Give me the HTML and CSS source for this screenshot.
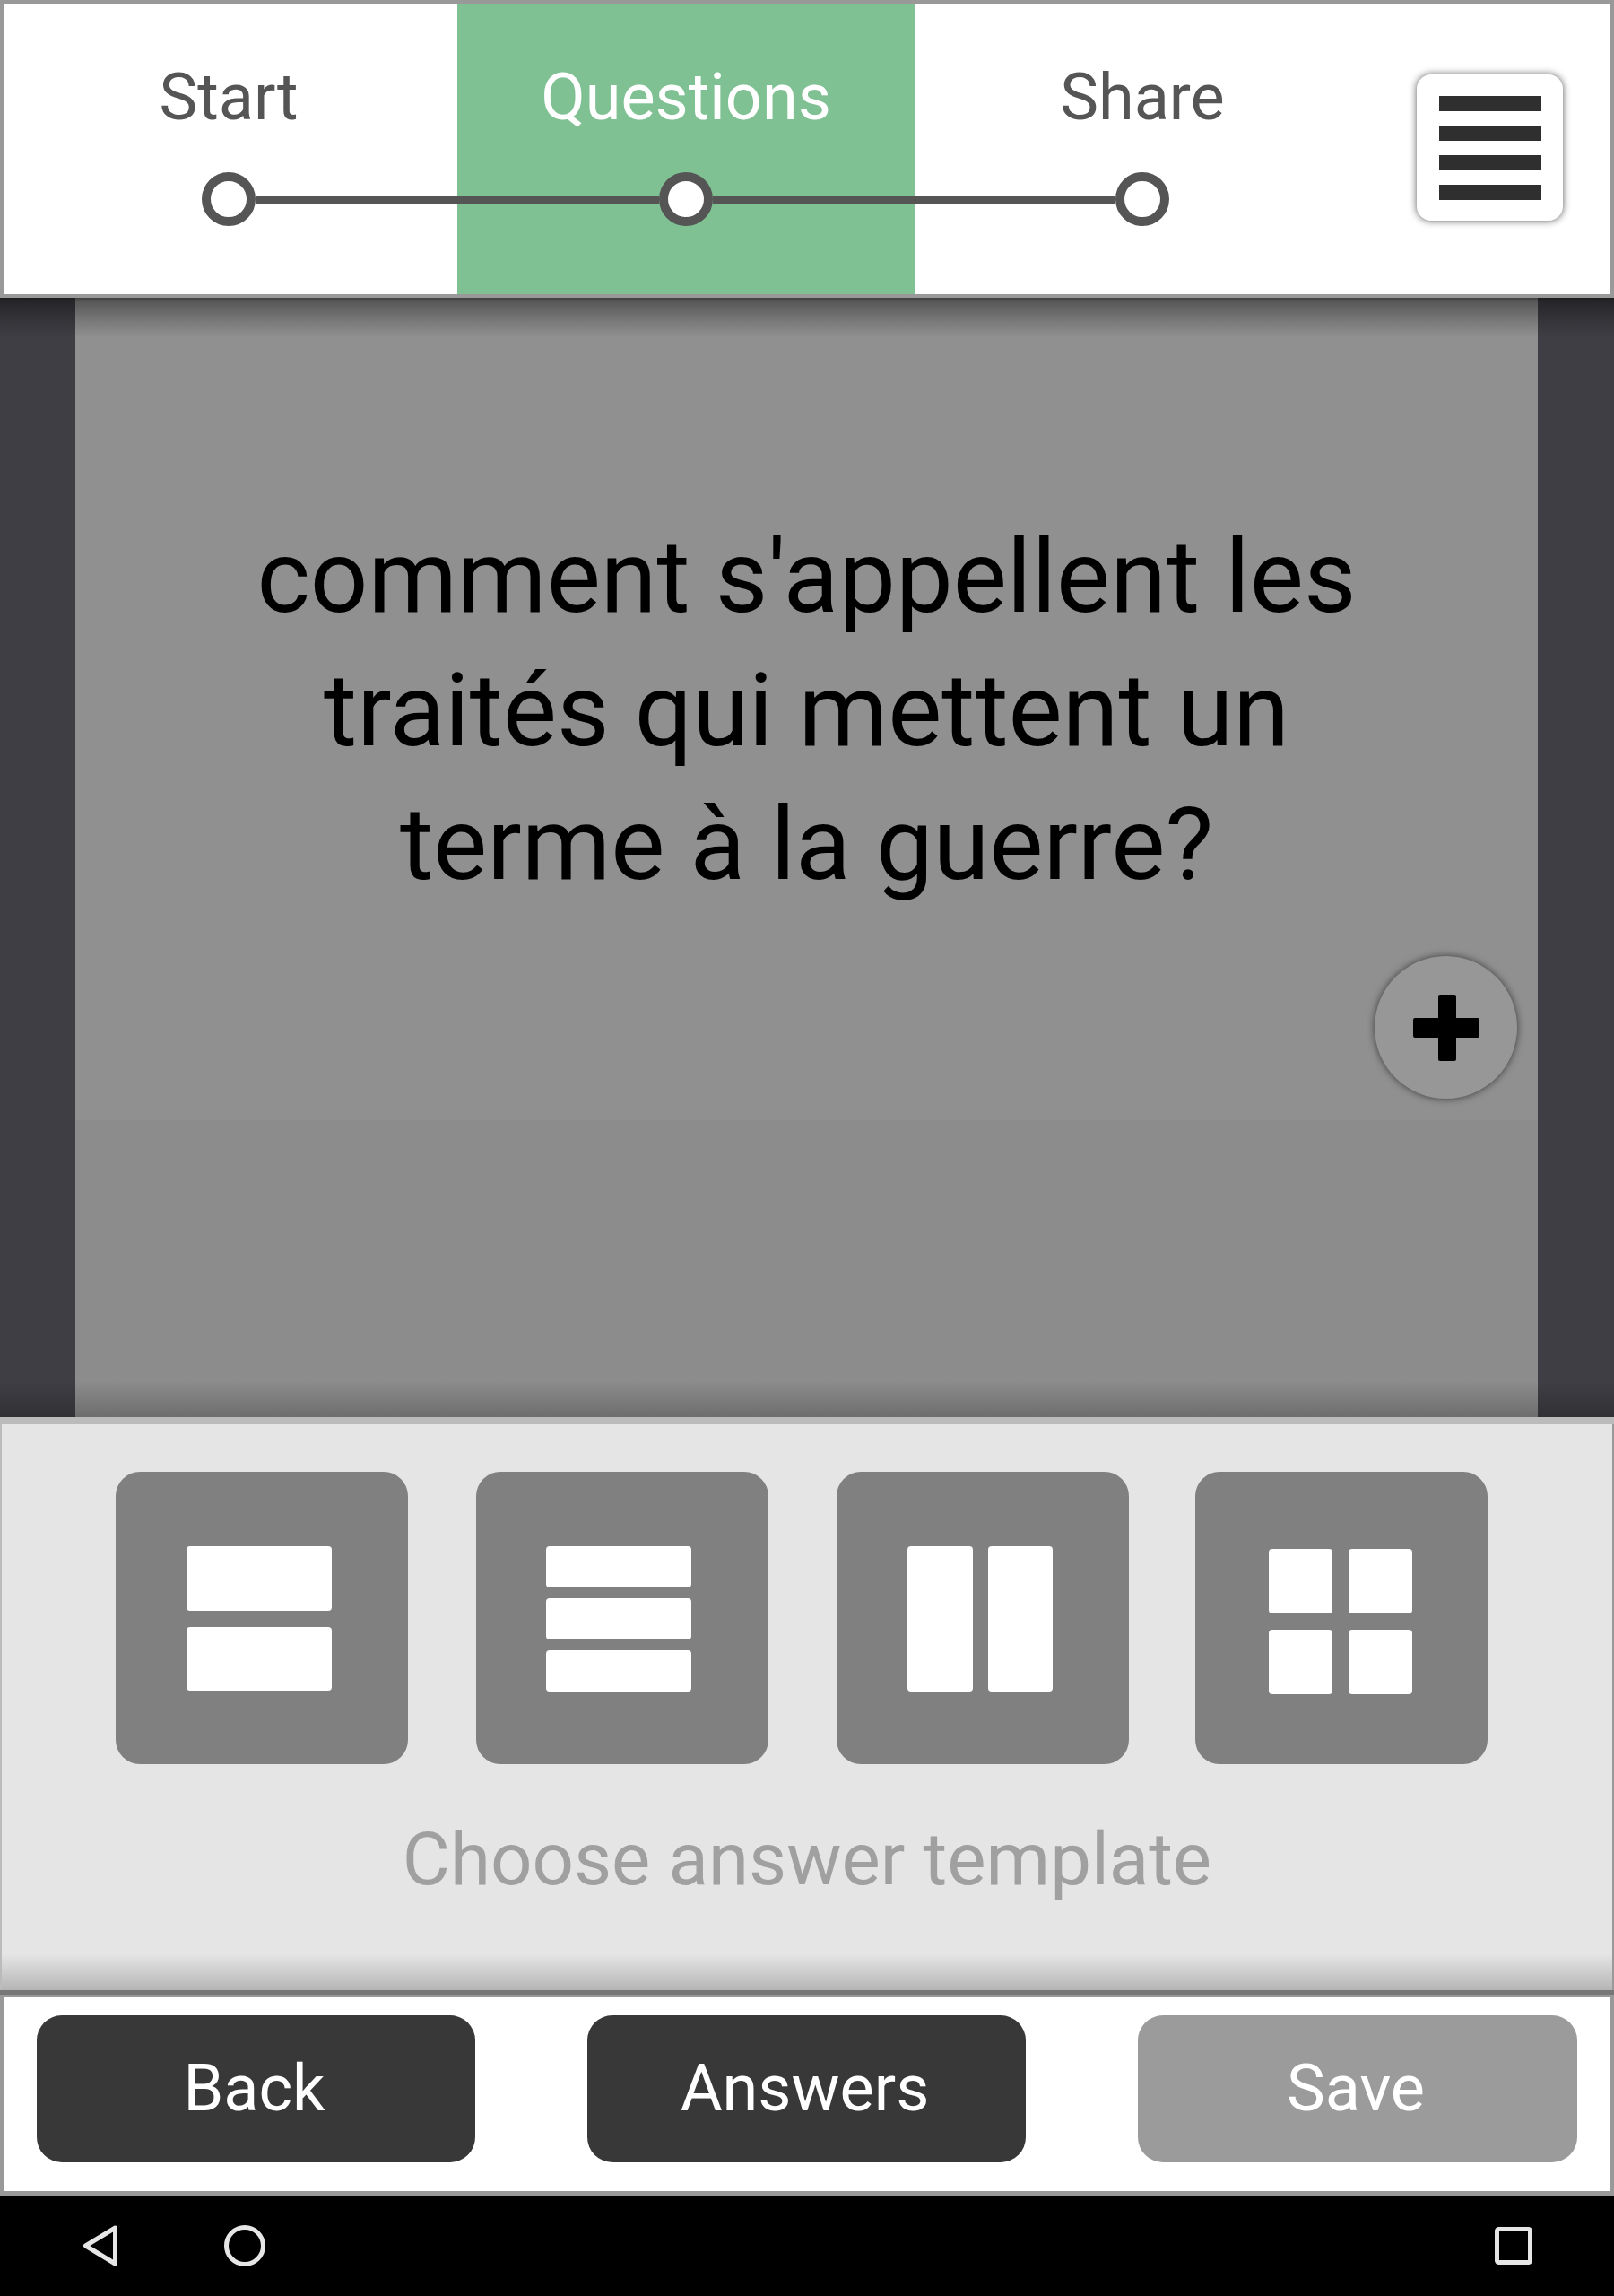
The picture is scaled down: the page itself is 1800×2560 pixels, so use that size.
FILE: index.html
```html
<!DOCTYPE html>
<html lang="fr">
<head>
<meta charset="utf-8">
<title>Questions</title>
<link rel="stylesheet" href="styles.css">
</head>
<body>
<div class="app">
  <header class="topbar">
    <div class="step">
      <span class="step-label">Start</span>
      <div class="track"><i class="seg seg-off"></i><i class="dot"></i><i class="seg"></i></div>
    </div>
    <div class="step step-active">
      <span class="step-label">Questions</span>
      <div class="track"><i class="seg"></i><i class="dot"></i><i class="seg"></i></div>
    </div>
    <div class="step">
      <span class="step-label">Share</span>
      <div class="track"><i class="seg"></i><i class="dot"></i><i class="seg seg-off"></i></div>
    </div>
    <div class="menu-cell">
      <button class="menu-btn" aria-label="Menu"><i></i><i></i><i></i><i></i></button>
    </div>
  </header>

  <main class="stage">
    <section class="panel">
      <div class="question">
        <p class="question-text">comment s'appellent les<br>traités qui mettent un<br>terme à la guerre?</p>
        <button class="fab" aria-label="Add">
          <svg class="fab-icon" viewBox="0 0 74 74" width="74" height="74"><path d="M28 2a2 2 0 0 1 2-2h16a2 2 0 0 1 2 2v24h24a2 2 0 0 1 2 2v18a2 2 0 0 1-2 2H48v24a2 2 0 0 1-2 2H30a2 2 0 0 1-2-2V48H2a2 2 0 0 1-2-2V28a2 2 0 0 1 2-2h26z" fill="#000"/></svg>
        </button>
      </div>
      <div class="panel-lower"></div>
    </section>
  </main>

  <section class="tray">
    <div class="tiles">
      <div class="tile tile-two"><i></i><i></i></div>
      <div class="tile tile-three"><i></i><i></i><i></i></div>
      <div class="tile tile-cols"><i></i><i></i></div>
      <div class="tile tile-grid"><i></i><i></i><i></i><i></i></div>
    </div>
    <p class="tray-caption">Choose answer template</p>
  </section>

  <footer class="actions">
    <button class="action">Back</button>
    <button class="action">Answers</button>
    <button class="action action-disabled">Save</button>
  </footer>

  <nav class="sysnav">
    <svg class="nav-back" viewBox="0 0 40 46" width="40" height="46"><path d="M36.5 3 3.5 23l33 20z" fill="none" stroke="#e6e6e6" stroke-width="5" stroke-linejoin="round"/></svg>
    <svg class="nav-home" viewBox="0 0 46 46" width="46" height="46"><circle cx="23" cy="23" r="20.5" fill="none" stroke="#e6e6e6" stroke-width="5"/></svg>
    <svg class="nav-recent" viewBox="0 0 42 42" width="42" height="42"><rect x="2.5" y="2.5" width="37" height="37" rx="2" fill="none" stroke="#e6e6e6" stroke-width="5"/></svg>
  </nav>
</div>
</body>
</html>
```
FILE: styles.css
```css
* { box-sizing: border-box; }
html, body { margin: 0; padding: 0; }
body { background: #000; font-family: Roboto, "Liberation Sans", sans-serif; }
button { font-family: inherit; border: 0; padding: 0; margin: 0; }
i { display: block; }

.app { width: 1800px; height: 2560px; display: flex; flex-direction: column; overflow: hidden; }

/* top stepper */
.topbar {
  height: 332px; flex: none; padding: 4px 0;
  background: #fff; box-shadow: inset 0 0 0 4px #999;
  display: grid; grid-template-columns: 510px 510px 508px 1fr;
}
.step { display: flex; flex-direction: column; align-items: stretch; padding-top: 57px; }
.step-label { display: block; height: 96px; line-height: 96px; font-size: 72px; color: #555; text-align: center; }
.step-active { background: #80c194; }
.step-active .step-label { color: #fff; }
.track { display: flex; align-items: center; height: 60px; margin-top: 35px; }
.seg { flex: 1; height: 9px; background: #555; }
.seg-off { background: transparent; }
.dot { width: 60px; height: 60px; border-radius: 50%; border: 10px solid #555; background: #fff; flex: none; }

.menu-cell { padding: 79px 0 0 52px; }
.menu-btn {
  width: 163px; height: 163px; border-radius: 16px; background: #fff;
  box-shadow: 0 0 9px rgba(0,0,0,.65);
  display: flex; flex-direction: column; align-items: center; gap: 16px; padding-top: 24px;
}
.menu-btn i { width: 114px; height: 17px; background: #2f2f2f; }

/* question stage */
.stage { height: 1248px; flex: none; background: #3f3e44; padding: 0 85px 0 84px; position: relative; }
.stage::after {
  content: ""; position: absolute; inset: 0; pointer-events: none;
  background:
    linear-gradient(to bottom, rgba(0,0,0,.55) 0, rgba(0,0,0,.38) 5px, rgba(0,0,0,.16) 26px, rgba(0,0,0,0) 44px),
    linear-gradient(to top, rgba(0,0,0,.22) 0, rgba(0,0,0,0) 40px);
}
.panel { height: 100%; display: flex; flex-direction: column; }
.question { height: 917px; flex: none; background: #909090; position: relative; padding-top: 237px; }
.question-text { margin: 0; font-size: 113.5px; line-height: 149px; color: #000; text-align: center; }
.panel-lower { flex: 1; background: #8c8c8c; }
.fab {
  position: absolute; left: 1449px; top: 734px; width: 159px; height: 159px; border-radius: 50%;
  background: #979797; box-shadow: 0 0 8px rgba(0,0,0,.6);
  display: flex; align-items: center; justify-content: center;
}
.fab-icon { display: block; }

/* template tray */
.tray {
  height: 639px; flex: none; padding-top: 53px;
  border-top: 8px solid #bbb;
  background: linear-gradient(to top, #b5b5b5 0, #e5e5e5 40px);
  box-shadow: inset 2px 0 0 #bbb, inset -2px 0 0 #999;
}
.tiles { display: flex; gap: 76px; padding-left: 129px; }
.tile { width: 326px; height: 326px; border-radius: 27px; background: #808080; display: grid; }
.tile:last-child { margin-left: -2px; }
.tile i { background: #fff; border-radius: 4px; }
.tile-two { padding: 83px 0 0 79px; grid-template: 72px 71px / 162px; row-gap: 18px; }
.tile-three { padding: 83px 0 0 78px; grid-template: repeat(3, 46px) / 162px; row-gap: 12px; }
.tile-cols { padding: 83px 0 0 79px; grid-template: 162px / 73px 72px; column-gap: 17px; }
.tile-grid { padding: 86px 0 0 82px; grid-template: 72px 72px / 71px 71px; gap: 18px; }
.tray-caption { margin: 61px 0 0; height: 90px; line-height: 90px; text-align: center; font-size: 81.6px; color: #a0a0a0; }

/* actions */
.actions {
  height: 229px; flex: none; background: #fff;
  border-top: 5px solid #777; border-bottom: 5px solid #999;
  box-shadow: inset 0 3px 0 #999, inset 4px 0 0 #999, inset -4px 0 0 #999;
  display: flex; gap: 125px; padding: 23px 41px 0;
}
.action { width: 489px; height: 164px; border-radius: 28px; background: #383838; color: #fff; font-size: 72px; padding: 0 4px 2px 0; }
.action-disabled { background: #9b9b9b; width: 490px; }

/* system navigation */
.sysnav { flex: 1; background: #000; display: flex; align-items: flex-start; padding: 33px 91px 0 92px; }
.nav-back { display: block; }
.nav-home { display: block; margin-left: 118px; }
.nav-recent { display: block; margin: 2px 0 0 auto; }
```
